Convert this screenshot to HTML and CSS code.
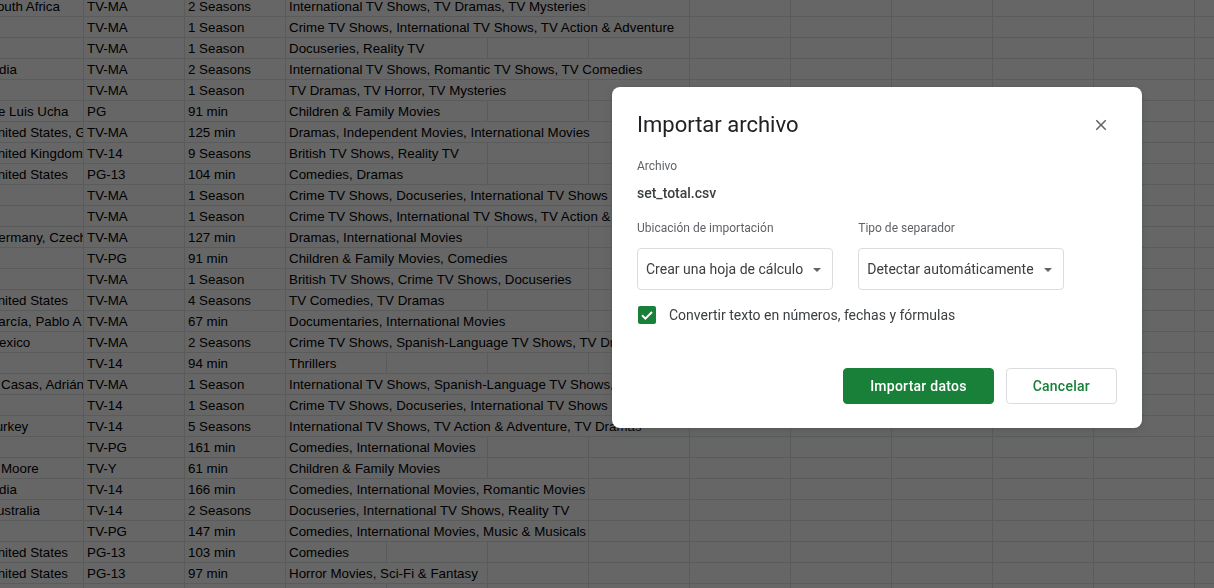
FILE: index.html
```html
<!DOCTYPE html>
<html lang="es">
<head>
<meta charset="utf-8">
<title>Importar archivo</title>
<link rel="stylesheet" href="styles.css">
</head>
<body>
<div class="sheet">
  <div class="row"><div class="c c0">South Africa</div><div class="c">TV-MA</div><div class="c">2 Seasons</div><div class="c g s3">International TV Shows, TV Dramas, TV Mysteries</div></div>
  <div class="row"><div class="c c0"></div><div class="c">TV-MA</div><div class="c">1 Season</div><div class="c g s4">Crime TV Shows, International TV Shows, TV Action &amp; Adventure</div></div>
  <div class="row"><div class="c c0"></div><div class="c">TV-MA</div><div class="c">1 Season</div><div class="c g s2">Docuseries, Reality TV</div></div>
  <div class="row"><div class="c c0">India</div><div class="c">TV-MA</div><div class="c">2 Seasons</div><div class="c g s4">International TV Shows, Romantic TV Shows, TV Comedies</div></div>
  <div class="row"><div class="c c0"></div><div class="c">TV-MA</div><div class="c">1 Season</div><div class="c g s3">TV Dramas, TV Horror, TV Mysteries</div></div>
  <div class="row"><div class="c c0 spill-e">e Luis Ucha</div><div class="c">PG</div><div class="c">91 min</div><div class="c g s2">Children &amp; Family Movies</div></div>
  <div class="row"><div class="c c0">United States, G</div><div class="c">TV-MA</div><div class="c">125 min</div><div class="c g s4">Dramas, Independent Movies, International Movies</div></div>
  <div class="row"><div class="c c0">United Kingdom</div><div class="c">TV-14</div><div class="c">9 Seasons</div><div class="c g s2">British TV Shows, Reality TV</div></div>
  <div class="row"><div class="c c0">United States</div><div class="c">PG-13</div><div class="c">104 min</div><div class="c g s2">Comedies, Dramas</div></div>
  <div class="row"><div class="c c0"></div><div class="c">TV-MA</div><div class="c">1 Season</div><div class="c g s4">Crime TV Shows, Docuseries, International TV Shows</div></div>
  <div class="row"><div class="c c0"></div><div class="c">TV-MA</div><div class="c">1 Season</div><div class="c g s4">Crime TV Shows, International TV Shows, TV Action &amp; Adventure</div></div>
  <div class="row"><div class="c c0">Germany, Czech</div><div class="c">TV-MA</div><div class="c">127 min</div><div class="c g s2">Dramas, International Movies</div></div>
  <div class="row"><div class="c c0"></div><div class="c">TV-PG</div><div class="c">91 min</div><div class="c g s3">Children &amp; Family Movies, Comedies</div></div>
  <div class="row"><div class="c c0"></div><div class="c">TV-MA</div><div class="c">1 Season</div><div class="c g s3">British TV Shows, Crime TV Shows, Docuseries</div></div>
  <div class="row"><div class="c c0">United States</div><div class="c">TV-MA</div><div class="c">4 Seasons</div><div class="c g s2">TV Comedies, TV Dramas</div></div>
  <div class="row"><div class="c c0">García, Pablo A</div><div class="c">TV-MA</div><div class="c">67 min</div><div class="c g s3">Documentaries, International Movies</div></div>
  <div class="row"><div class="c c0">Mexico</div><div class="c">TV-MA</div><div class="c">2 Seasons</div><div class="c g s4">Crime TV Shows, Spanish-Language TV Shows, TV Dramas</div></div>
  <div class="row"><div class="c c0"></div><div class="c">TV-14</div><div class="c">94 min</div><div class="c g s1">Thrillers</div></div>
  <div class="row"><div class="c c0 spill">Casas, Adrián</div><div class="c">TV-MA</div><div class="c">1 Season</div><div class="c g s4">International TV Shows, Spanish-Language TV Shows, TV Dramas</div></div>
  <div class="row"><div class="c c0"></div><div class="c">TV-14</div><div class="c">1 Season</div><div class="c g s4">Crime TV Shows, Docuseries, International TV Shows</div></div>
  <div class="row"><div class="c c0">Turkey</div><div class="c">TV-14</div><div class="c">5 Seasons</div><div class="c g s4">International TV Shows, TV Action &amp; Adventure, TV Dramas</div></div>
  <div class="row"><div class="c c0"></div><div class="c">TV-PG</div><div class="c">161 min</div><div class="c g s2">Comedies, International Movies</div></div>
  <div class="row"><div class="c c0 spill">Moore</div><div class="c">TV-Y</div><div class="c">61 min</div><div class="c g s2">Children &amp; Family Movies</div></div>
  <div class="row"><div class="c c0">India</div><div class="c">TV-14</div><div class="c">166 min</div><div class="c g s3">Comedies, International Movies, Romantic Movies</div></div>
  <div class="row"><div class="c c0">Australia</div><div class="c">TV-14</div><div class="c">2 Seasons</div><div class="c g s3">Docuseries, International TV Shows, Reality TV</div></div>
  <div class="row"><div class="c c0"></div><div class="c">TV-PG</div><div class="c">147 min</div><div class="c g s3">Comedies, International Movies, Music &amp; Musicals</div></div>
  <div class="row"><div class="c c0">United States</div><div class="c">PG-13</div><div class="c">103 min</div><div class="c g s1">Comedies</div></div>
  <div class="row"><div class="c c0">United States</div><div class="c">PG-13</div><div class="c">97 min</div><div class="c g s2">Horror Movies, Sci-Fi &amp; Fantasy</div></div>
  <div class="row"><div class="c c0"></div><div class="c"></div><div class="c"></div><div class="c g s1"></div></div>
</div>

<div class="scrim"></div>

<div class="dialog" role="dialog" aria-labelledby="dlg-title">
  <div class="dlg-head">
    <h1 class="dlg-title" id="dlg-title">Importar archivo</h1>
    <svg class="close" viewBox="0 0 24 24" aria-label="Cerrar"><path d="M19 6.41L17.59 5 12 10.59 6.41 5 5 6.41 10.59 12 5 17.59 6.41 19 12 13.41 17.59 19 19 17.59 13.41 12z"/></svg>
  </div>
  <div class="field-label file-label">Archivo</div>
  <div class="file-name">set_total.csv</div>
  <div class="options">
    <div class="option">
      <div class="field-label">Ubicación de importación</div>
      <div class="select"><span>Crear una hoja de cálculo</span><span class="caret"></span></div>
    </div>
    <div class="option">
      <div class="field-label">Tipo de separador</div>
      <div class="select"><span>Detectar automáticamente</span><span class="caret"></span></div>
    </div>
  </div>
  <div class="check-row">
    <span class="checkbox"><svg viewBox="0 0 18 18"><polyline points="4,9.2 7.4,12.6 14,6" /></svg></span>
    <span class="check-label">Convertir texto en números, fechas y fórmulas</span>
  </div>
  <div class="actions">
    <button class="btn primary">Importar datos</button>
    <button class="btn secondary">Cancelar</button>
  </div>
</div>
</body>
</html>
```

FILE: styles.css
```css
* { box-sizing: border-box; }

html, body {
  margin: 0;
  height: 100%;
  overflow: hidden;
  background: #ffffff;
}

/* ---------- spreadsheet behind the modal ---------- */
.sheet {
  margin: -4px 0 0 -15px;
  font-family: "Liberation Sans", Arial, sans-serif;
  font-size: 13.33px;
  color: #000000;
}

.row {
  display: flex;
  gap: 1px;
  width: 1340px;
  height: 21px;
  border-bottom: 1px solid #e2e3e3;
  background-color: #ffffff;
  background-image: repeating-linear-gradient(90deg, transparent 0 100px, #e2e3e3 100px 101px);
  background-position: -2px 0;
}

.c {
  flex: none;
  width: 100px;
  padding: 3px 0 0 3px;
  line-height: 15px;
  white-space: nowrap;
  overflow: hidden;
  background: #ffffff;
}

.c0 { width: 98px; }
.spill { text-indent: 13px; }
.spill-e { text-indent: 10px; }

.g { overflow: visible; }
.s1 { width: 100px; }
.s2 { width: 201px; }
.s3 { width: 302px; }
.s4 { width: 403px; }

/* ---------- modal ---------- */
.scrim {
  position: fixed;
  inset: 0;
  background: rgba(0, 0, 0, 0.6);
}

.dialog {
  position: fixed;
  left: 612px;
  top: 87px;
  width: 530px;
  height: 341px;
  background: #ffffff;
  border-radius: 8px;
  padding: 24px 25px 24px 25px;
  display: flex;
  flex-direction: column;
  font-family: Roboto, "Liberation Sans", Arial, sans-serif;
  color: #3c4043;
  box-shadow: 0 4px 8px 3px rgba(60, 64, 67, 0.15), 0 1px 3px rgba(60, 64, 67, 0.3);
}

.dlg-head {
  display: flex;
  align-items: center;
  justify-content: space-between;
  height: 28px;
}

.dlg-title {
  margin: 0;
  font-size: 22px;
  line-height: 28px;
  font-weight: 400;
  color: #202124;
}

.close {
  width: 18px;
  height: 18px;
  margin-right: 7px;
  fill: #5f6368;
}

.field-label {
  font-size: 12px;
  line-height: 16px;
  color: #5f6368;
}

.file-label { margin-top: 19px; }

.file-name {
  margin-top: 9px;
  font-size: 14px;
  line-height: 20px;
  font-weight: 500;
  color: #3c4043;
}

.options {
  display: flex;
  gap: 25px;
  margin-top: 17px;
}

.option {
  display: flex;
  flex-direction: column;
  align-items: flex-start;
}

.select {
  margin-top: 12px;
  height: 42px;
  display: flex;
  align-items: center;
  gap: 10px;
  padding: 0 11px 0 8px;
  border: 1px solid #dadce0;
  border-radius: 4px;
  font-size: 14px;
  color: #3c4043;
}

.caret {
  width: 0;
  height: 0;
  border-left: 4px solid transparent;
  border-right: 4px solid transparent;
  border-top: 4px solid #5f6368;
  margin-top: 1px;
}

.check-row {
  display: flex;
  align-items: center;
  gap: 13px;
  margin-top: 15px;
  height: 20px;
}

.checkbox {
  width: 18px;
  height: 18px;
  margin-left: 1px;
  border-radius: 2px;
  background: #188038;
  display: flex;
}

.checkbox svg {
  width: 18px;
  height: 18px;
  fill: none;
  stroke: #ffffff;
  stroke-width: 2;
}

.check-label {
  font-size: 14px;
  line-height: 20px;
  color: #3c4043;
}

.actions {
  margin-top: auto;
  display: flex;
  justify-content: flex-end;
  gap: 12px;
}

.btn {
  height: 36px;
  padding: 0 26px;
  border-radius: 4px;
  font-family: Roboto, "Liberation Sans", Arial, sans-serif;
  font-size: 14px;
  font-weight: 500;
  letter-spacing: 0.25px;
  cursor: pointer;
}

.primary {
  background: #188038;
  border: 1px solid #188038;
  color: #ffffff;
}

.secondary {
  background: #ffffff;
  border: 1px solid #dadce0;
  color: #188038;
}
```
